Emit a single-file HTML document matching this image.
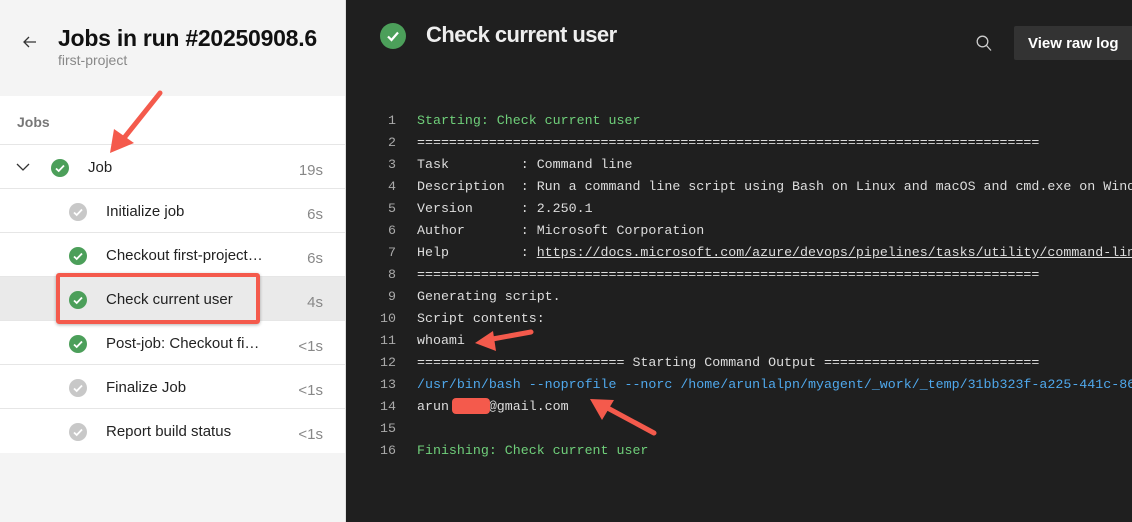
<!DOCTYPE html>
<html><head><meta charset="utf-8"><style>
*{margin:0;padding:0;box-sizing:border-box}
body{width:1132px;height:522px;overflow:hidden;position:relative;font-family:"Liberation Sans",sans-serif;background:#1f1f1f}
#left{position:absolute;left:0;top:0;width:346px;height:522px;background:#f4f4f4;border-right:1px solid #e0e0e0}
#hdr{height:96px;background:#f4f4f4;position:relative}
.back{position:absolute;left:22px;top:34px}
h1{position:absolute;left:58px;top:25px;font-size:23px;font-weight:bold;color:#111;letter-spacing:-0.25px}
.sub{position:absolute;left:58px;top:52px;font-size:14px;color:#888}
#list{position:absolute;top:96px;left:0;width:345px;background:#fff}
.jobs{height:49px;padding:18px 0 0 17px;font-size:14px;font-weight:bold;color:#777;border-bottom:1px solid #e6e6e6}
.row{height:44px;position:relative;border-bottom:1px solid #e6e6e6;font-size:15px;color:#222}
.row.sel{background:#eaeaea}
.row .ic{position:absolute;top:14px}
.row .t{position:absolute;top:14px;left:106px}
.row .d{position:absolute;right:22px;top:17px;color:#888;font-size:15px}
#right{position:absolute;left:346px;top:0;right:0;height:522px;background:#1f1f1f}
.title{position:absolute;left:80px;top:22px;font-size:22px;font-weight:bold;color:#eee;letter-spacing:-0.55px}
.btn{position:absolute;left:668px;top:26px;width:130px;height:34px;background:#333;border-radius:2px;color:#fff;font-weight:bold;font-size:15px;padding:9px 0 0 14px}
.log{position:absolute;top:110px;left:0;font-family:"Liberation Mono",monospace;font-size:13.3px;line-height:22px;white-space:pre;color:#ddd}
.log .n{display:inline-block;width:50px;text-align:right;color:#aaa;margin-right:21px}
.g{color:#6fcf7a}.b{color:#4fa8ec}.u{text-decoration:underline}
</style></head><body>
<div id="left">
<div id="hdr">
<svg class="back" width="16" height="16" viewBox="0 0 16 16"><path d="M14 8H2M7 3L2 8l5 5" stroke="#333" stroke-width="1.3" fill="none"/></svg>
<h1>Jobs in run #20250908.6</h1>
<div class="sub">first-project</div>
</div>
<div id="list">
<div class="jobs">Jobs</div>
<div class="row"><svg style="position:absolute;left:16px;top:17px" width="14" height="10" viewBox="0 0 14 10"><path d="M1 2l6 6 6-6" stroke="#333" stroke-width="1.3" fill="none"/></svg>
<svg class="ic" style="left:51px" width="18" height="18"><circle cx="9" cy="9" r="9" fill="#4c9f5a"/><path d="M5 9.5l2.7 2.5L13 6.5" stroke="#fff" stroke-width="1.8" fill="none"/></svg>
<span class="t" style="left:88px">Job</span><span class="d">19s</span></div>
<div class="row"><svg class="ic" style="left:69px" width="18" height="18"><circle cx="9" cy="9" r="9" fill="#c8c8c8"/><path d="M5 9.5l2.7 2.5L13 6.5" stroke="#fff" stroke-width="1.8" fill="none"/></svg><span class="t">Initialize job</span><span class="d">6s</span></div>
<div class="row"><svg class="ic" style="left:69px" width="18" height="18"><circle cx="9" cy="9" r="9" fill="#4c9f5a"/><path d="M5 9.5l2.7 2.5L13 6.5" stroke="#fff" stroke-width="1.8" fill="none"/></svg><span class="t">Checkout first-project…</span><span class="d">6s</span></div>
<div class="row sel"><svg class="ic" style="left:69px" width="18" height="18"><circle cx="9" cy="9" r="9" fill="#4c9f5a"/><path d="M5 9.5l2.7 2.5L13 6.5" stroke="#fff" stroke-width="1.8" fill="none"/></svg><span class="t">Check current user</span><span class="d">4s</span></div>
<div class="row"><svg class="ic" style="left:69px" width="18" height="18"><circle cx="9" cy="9" r="9" fill="#4c9f5a"/><path d="M5 9.5l2.7 2.5L13 6.5" stroke="#fff" stroke-width="1.8" fill="none"/></svg><span class="t">Post-job: Checkout fi…</span><span class="d">&lt;1s</span></div>
<div class="row"><svg class="ic" style="left:69px" width="18" height="18"><circle cx="9" cy="9" r="9" fill="#c8c8c8"/><path d="M5 9.5l2.7 2.5L13 6.5" stroke="#fff" stroke-width="1.8" fill="none"/></svg><span class="t">Finalize Job</span><span class="d">&lt;1s</span></div>
<div class="row" style="border-bottom:none"><svg class="ic" style="left:69px" width="18" height="18"><circle cx="9" cy="9" r="9" fill="#c8c8c8"/><path d="M5 9.5l2.7 2.5L13 6.5" stroke="#fff" stroke-width="1.8" fill="none"/></svg><span class="t">Report build status</span><span class="d">&lt;1s</span></div>
</div>
<div style="position:absolute;left:56px;top:273px;width:204px;height:51px;border:4px solid #f45a4c;border-radius:3px;box-shadow:0 1px 3px rgba(0,0,0,.3)"></div>
<svg style="position:absolute;left:100px;top:85px" width="70" height="75"><path d="M60 8L20 58" stroke="#f45a4c" stroke-width="5" stroke-linecap="round"/><path d="M10 68L14 44L34 58Z" fill="#f45a4c"/></svg>
</div>
<div id="right">
<svg style="position:absolute;left:34px;top:23px" width="26" height="26"><circle cx="13" cy="13" r="13" fill="#4c9f5a"/><path d="M8 13.5l3.5 3.5L18 9.5" stroke="#fff" stroke-width="2.2" fill="none"/></svg>
<div class="title">Check current user</div>
<svg style="position:absolute;left:630px;top:35px" width="16" height="17"><circle cx="6.5" cy="6.5" r="5.3" stroke="#ccc" stroke-width="1.3" fill="none"/><path d="M10.5 10.5l4.5 5" stroke="#ccc" stroke-width="1.3"/></svg>
<div class="btn">View raw log</div>
<div class="log"><span class="n">1</span><span class="g">Starting: Check current user</span>
<span class="n">2</span>==============================================================================
<span class="n">3</span>Task         : Command line
<span class="n">4</span>Description  : Run a command line script using Bash on Linux and macOS and cmd.exe on Windows
<span class="n">5</span>Version      : 2.250.1
<span class="n">6</span>Author       : Microsoft Corporation
<span class="n">7</span>Help         : <span class="u">https://docs.microsoft.com/azure/devops/pipelines/tasks/utility/command-line</span>
<span class="n">8</span>==============================================================================
<span class="n">9</span>Generating script.
<span class="n">10</span>Script contents:
<span class="n">11</span>whoami
<span class="n">12</span>========================== Starting Command Output ===========================
<span class="n">13</span><span class="b">/usr/bin/bash --noprofile --norc /home/arunlalpn/myagent/_work/_temp/31bb323f-a225-441c-86</span>
<span class="n">14</span>arun     @gmail.com
<span class="n">15</span>
<span class="n">16</span><span class="g">Finishing: Check current user</span></div>
<div style="position:absolute;left:106px;top:398px;width:38px;height:16px;background:#f45a4c;border-radius:4px"></div>
<svg style="position:absolute;left:125px;top:325px" width="70" height="30"><path d="M60 7L16 15" stroke="#f45a4c" stroke-width="5" stroke-linecap="round"/><path d="M4 18L22 6L25 26Z" fill="#f45a4c"/></svg>
<svg style="position:absolute;left:238px;top:390px" width="80" height="50"><path d="M70 43L18 15" stroke="#f45a4c" stroke-width="5" stroke-linecap="round"/><path d="M6 9L30 10L18 30Z" fill="#f45a4c"/></svg>
</div>
</body></html>
